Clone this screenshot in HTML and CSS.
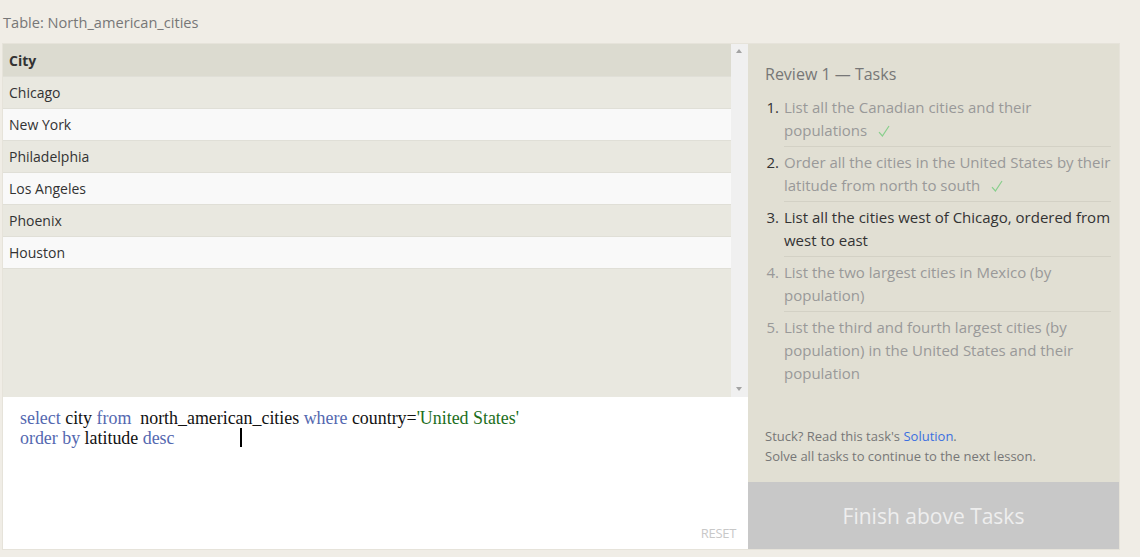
FILE: index.html
```html
<!DOCTYPE html>
<html>
<head>
<meta charset="utf-8">
<link rel="stylesheet" href="styles.css">
</head>
<body>
<div class="title">Table: North_american_cities</div>
<div class="wrap">
  <div class="left">
    <div class="results">
      <div class="table">
        <div class="row head">City</div>
        <div class="row odd">Chicago</div>
        <div class="row even">New York</div>
        <div class="row odd">Philadelphia</div>
        <div class="row even">Los Angeles</div>
        <div class="row odd">Phoenix</div>
        <div class="row even">Houston</div>
      </div>
      <div class="scrollbar">
        <span class="arrow up"></span>
        <span class="arrow down"></span>
      </div>
    </div>
    <div class="editor">
      <div class="code">
        <div><span class="kw">select</span> city <span class="kw">from</span>&nbsp; north_american_cities <span class="kw">where</span> country=<span class="str">'United States'</span></div>
        <div><span class="kw">order by</span> latitude <span class="kw">desc</span></div>
      </div>
      <span class="caret"></span>
      <div class="reset">RESET</div>
    </div>
  </div>
  <div class="right">
    <div class="tasks">
      <div class="heading">Review 1 — Tasks</div>
      <ol class="list">
        <li class="done"><span class="num">1.</span><span class="txt">List all the Canadian cities and their populations<svg class="check" width="12" height="12" viewBox="0 0 12 12"><path d="M1 7.2 L4.4 11 L11 1" fill="none" stroke="#88cf8c" stroke-width="1.2"/></svg></span></li>
        <li class="done"><span class="num">2.</span><span class="txt">Order all the cities in the United States by their latitude from north to south<svg class="check" width="12" height="12" viewBox="0 0 12 12"><path d="M1 7.2 L4.4 11 L11 1" fill="none" stroke="#88cf8c" stroke-width="1.2"/></svg></span></li>
        <li class="current"><span class="num">3.</span><span class="txt">List all the cities west of Chicago, ordered from west to east</span></li>
        <li class="todo"><span class="num">4.</span><span class="txt">List the two largest cities in Mexico (by population)</span></li>
        <li class="todo last"><span class="num">5.</span><span class="txt">List the third and fourth largest cities (by population) in the United States and their population</span></li>
      </ol>
      <div class="stuck">
        <div>Stuck? Read this task's <span class="link">Solution</span>.</div>
        <div>Solve all tasks to continue to the next lesson.</div>
      </div>
    </div>
    <div class="finish">Finish above Tasks</div>
  </div>
</div>
</body>
</html>
```
FILE: styles.css
```css
html, body {
  margin: 0;
  padding: 0;
}
body {
  background: #f0ede6;
  font-family: "Open Sans", "Noto Sans", sans-serif;
  width: 1140px;
  height: 557px;
  overflow: hidden;
}
.title {
  font-size: 14.6px;
  color: #777;
  padding: 12px 0 0 3px;
  height: 43px;
  box-sizing: border-box;
  line-height: 20px;
}
.wrap {
  display: flex;
  margin-left: 2px;
  width: 1118px;
  height: 507px;
  border: 1px solid #e6e3da;
  border-top: none;
  box-sizing: border-box;
}
.left {
  width: 745px;
  display: flex;
  flex-direction: column;
  border-top: 1px solid #e6e3da;
}
.results {
  display: flex;
  height: 353px;
  flex: none;
  background: #e9e8e0;
}
.table {
  flex: 1;
}
.row {
  height: 32px;
  line-height: 31px;
  padding-left: 6px;
  font-size: 14px;
  color: #333;
  border-bottom: 1px solid #e0dfd7;
  box-sizing: border-box;
}
.row.head {
  background: #dcdbd0;
  font-weight: bold;
  color: #333;
  height: 33px;
  line-height: 33px;
}
.row.odd { background: #e9e8e0; }
.row.even { background: #f9f9f9; }
.scrollbar {
  width: 17px;
  background: #f0f0f0;
  position: relative;
}
.arrow {
  position: absolute;
  left: 5px;
  width: 0;
  height: 0;
  border-left: 3.5px solid transparent;
  border-right: 3.5px solid transparent;
}
.arrow.up {
  top: 5px;
  border-bottom: 4px solid #a3a3a3;
}
.arrow.down {
  bottom: 6px;
  border-top: 4px solid #a3a3a3;
}
.editor {
  background: #fff;
  flex: 1;
  position: relative;
  padding: 11px 0 0 17px;
  box-sizing: border-box;
}
.code {
  font-family: "Liberation Serif", "Times New Roman", serif;
  font-size: 17.9px;
  line-height: 20px;
  color: #111;
}
.kw { color: #5468b0; }
.str { color: #1c6e1c; }
.caret {
  position: absolute;
  left: 237px;
  top: 31px;
  width: 2px;
  height: 19px;
  background: #000;
}
.reset {
  position: absolute;
  right: 12px;
  bottom: 7px;
  font-size: 13px;
  color: #c8c8c8;
  letter-spacing: -0.3px;
}
.right {
  width: 371px;
  background: #e1dfd3;
  display: flex;
  flex-direction: column;
  border-top: 1px solid #e6e3da;
}
.tasks {
  flex: 1;
  padding: 19px 8px 0 17px;
  display: flex;
  flex-direction: column;
}
.heading {
  font-size: 16px;
  color: #777;
  line-height: 22px;
  margin-bottom: 11px;
}
.list {
  list-style: none;
  margin: 0;
  padding: 0;
}
.list li {
  display: flex;
  font-size: 15px;
  line-height: 23px;
}
.num {
  width: 14px;
  flex: none;
  text-align: right;
  margin-right: 5px;
}
.txt {
  flex: 1;
  padding-bottom: 4px;
  border-bottom: 1px solid #d3d1c5;
}
.list li + li .txt, .list li + li .num { padding-top: 4px; }
.list li.last .txt { border-bottom: none; }
.done .num { color: #333; }
.done .txt { color: #999; }
.current .num, .current .txt { color: #333; }
.todo .num, .todo .txt { color: #999; }
.check {
  margin-left: 11px;
  vertical-align: -1px;
}
.stuck {
  margin-top: auto;
  padding-bottom: 16px;
  font-size: 13px;
  line-height: 20px;
  color: #777;
}
.link { color: #3b6fe0; }
.finish {
  height: 67px;
  flex: none;
  background: #c8c8c8;
  color: #eeeeee;
  font-size: 21px;
  display: flex;
  align-items: center;
  justify-content: center;
}
```
